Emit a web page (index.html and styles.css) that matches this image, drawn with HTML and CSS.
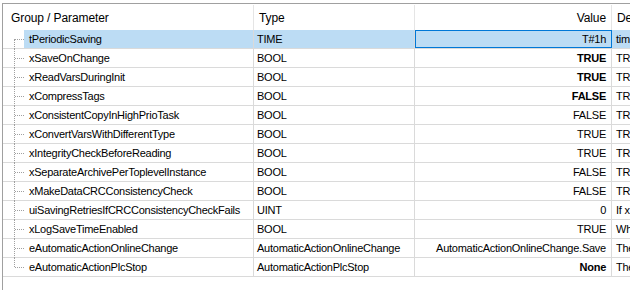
FILE: index.html
```html
<!DOCTYPE html>
<html>
<head>
<meta charset="utf-8">
<link rel="stylesheet" href="styles.css">
</head>
<body>
<div class="grid">
  <div class="head">
    <div class="c c-name"><span class="htext">Group / Parameter</span></div>
    <div class="c c-type"><span class="htext">Type</span></div>
    <div class="c c-value"><span class="htext">Value</span></div>
    <div class="c c-desc"><span class="htext">Description</span></div>
  </div>
  <div class="body">
    <div class="row first sel">
      <div class="c c-name"><span class="lbl">tPeriodicSaving</span></div>
      <div class="c c-type">TIME</div>
      <div class="c c-value focus">T#1h</div>
      <div class="c c-desc">time interval for periodic saving</div>
    </div>
    <div class="row">
      <div class="c c-name"><span class="lbl">xSaveOnChange</span></div>
      <div class="c c-type">BOOL</div>
      <div class="c c-value"><b>TRUE</b></div>
      <div class="c c-desc">TRUE: save on change</div>
    </div>
    <div class="row">
      <div class="c c-name"><span class="lbl">xReadVarsDuringInit</span></div>
      <div class="c c-type">BOOL</div>
      <div class="c c-value"><b>TRUE</b></div>
      <div class="c c-desc">TRUE: read variables during init</div>
    </div>
    <div class="row">
      <div class="c c-name"><span class="lbl">xCompressTags</span></div>
      <div class="c c-type">BOOL</div>
      <div class="c c-value"><b>FALSE</b></div>
      <div class="c c-desc">TRUE: compress tags</div>
    </div>
    <div class="row">
      <div class="c c-name"><span class="lbl">xConsistentCopyInHighPrioTask</span></div>
      <div class="c c-type">BOOL</div>
      <div class="c c-value">FALSE</div>
      <div class="c c-desc">TRUE: consistent copy</div>
    </div>
    <div class="row">
      <div class="c c-name"><span class="lbl">xConvertVarsWithDifferentType</span></div>
      <div class="c c-type">BOOL</div>
      <div class="c c-value">TRUE</div>
      <div class="c c-desc">TRUE: convert variables</div>
    </div>
    <div class="row">
      <div class="c c-name"><span class="lbl">xIntegrityCheckBeforeReading</span></div>
      <div class="c c-type">BOOL</div>
      <div class="c c-value">TRUE</div>
      <div class="c c-desc">TRUE: integrity check</div>
    </div>
    <div class="row">
      <div class="c c-name"><span class="lbl">xSeparateArchivePerToplevelInstance</span></div>
      <div class="c c-type">BOOL</div>
      <div class="c c-value">FALSE</div>
      <div class="c c-desc">TRUE: separate archive</div>
    </div>
    <div class="row">
      <div class="c c-name"><span class="lbl">xMakeDataCRCConsistencyCheck</span></div>
      <div class="c c-type">BOOL</div>
      <div class="c c-value">FALSE</div>
      <div class="c c-desc">TRUE: CRC check</div>
    </div>
    <div class="row">
      <div class="c c-name"><span class="lbl">uiSavingRetriesIfCRCConsistencyCheckFails</span></div>
      <div class="c c-type">UINT</div>
      <div class="c c-value">0</div>
      <div class="c c-desc">If xMakeDataCRCConsistencyCheck</div>
    </div>
    <div class="row">
      <div class="c c-name"><span class="lbl">xLogSaveTimeEnabled</span></div>
      <div class="c c-type">BOOL</div>
      <div class="c c-value">TRUE</div>
      <div class="c c-desc">When enabled</div>
    </div>
    <div class="row">
      <div class="c c-name"><span class="lbl">eAutomaticActionOnlineChange</span></div>
      <div class="c c-type">AutomaticActionOnlineChange</div>
      <div class="c c-value">AutomaticActionOnlineChange.Save</div>
      <div class="c c-desc">The action</div>
    </div>
    <div class="row last">
      <div class="c c-name"><span class="lbl">eAutomaticActionPlcStop</span></div>
      <div class="c c-type">AutomaticActionPlcStop</div>
      <div class="c c-value"><b>None</b></div>
      <div class="c c-desc">The action</div>
    </div>
  </div>
</div>
</body>
</html>
```
FILE: styles.css
```css
html, body {
  margin: 0;
  padding: 0;
  background: #ffffff;
  height: 290px;
  overflow: hidden;
}
body {
  padding: 3px 0 0 2px;
  box-sizing: border-box;
}
.grid {
  height: 287px;
  border-top: 1px solid #a0a0a0;
  border-left: 1px solid #a0a0a0;
  font-family: "Liberation Sans", Arial, sans-serif;
  font-size: 11px;
  letter-spacing: -0.25px;
  color: #000;
  overflow: hidden;
}
.head, .row {
  display: grid;
  grid-template-columns: 251px 161px 197px 1fr;
}
.head {
  height: 26px;
}
.head .c {
  border-right: 1px solid #e5e5e5;
  font-family: "Liberation Sans", Arial, sans-serif;
  font-size: 12px;
  letter-spacing: -0.1px;
  line-height: 26px;
  margin-top: 1px;
  height: 25px;
}
.head .c-name { padding-left: 8px; }
.head .c-type { padding-left: 5px; }
.head .c-value { text-align: right; padding-right: 5px; }
.head .c-desc { padding-left: 5px; border-right: none; }
.row {
  height: 18px;
  border-bottom: 1px solid #dadada;
  line-height: 18px;
}
.c {
  white-space: nowrap;
  overflow: hidden;
  box-sizing: border-box;
}
.row .c { border-right: 1px solid #dadada; }
.row .c-desc { border-right: none; padding-left: 4px; }
.row .c-type { padding-left: 3px; }
.row .c-value { text-align: right; padding-right: 5px; }
.row .c-name {
  position: relative;
  padding-left: 21px;
  overflow: visible;
}
.row .c-name::before {
  content: "";
  position: absolute;
  left: 11px;
  top: -1px;
  height: 20px;
  border-left: 1px dotted #a0a0a0;
}
.row.first .c-name::before { top: 9px; height: 10px; }
.row.last .c-name::before { height: 10px; }
.row .c-name::after {
  content: "";
  position: absolute;
  left: 12px;
  top: 9px;
  width: 9px;
  border-top: 1px dotted #a0a0a0;
}
.lbl {
  display: block;
  padding-left: 5px;
  height: 18px;
}
.sel .lbl, .sel .c-type, .sel .c-value, .sel .c-desc {
  background: #bcdcf4;
}
.sel .c-value.focus {
  outline: 1px solid #0078d7;
  outline-offset: -1px;
}
b { font-weight: bold; }
```
